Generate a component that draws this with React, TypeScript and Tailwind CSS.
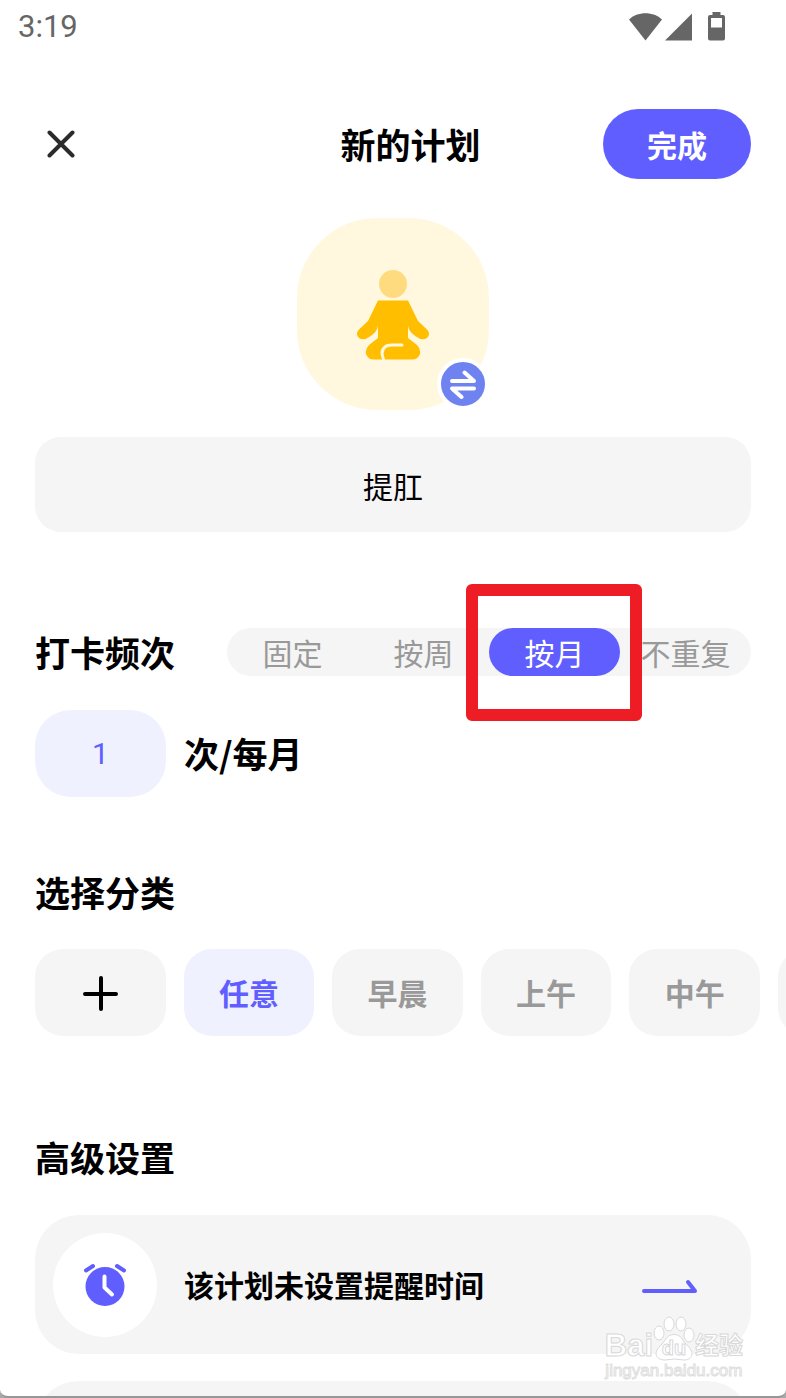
import { useState } from "react";
import clsx from "clsx";

const FREQUENCIES = ["固定", "按周", "按月", "不重复"];
const CATEGORIES = ["任意", "早晨", "上午", "中午"];

const StatusBar = () => (
  <div className="flex h-[54px] shrink-0 items-center justify-between pl-[18px] pr-[60px] text-[#666]">
    <span className="font-[Roboto,sans-serif] text-[31px]">3:19</span>
    <svg width="98" height="30" viewBox="0 0 98 30" fill="currentColor" aria-hidden="true">
      <path d="M1 7.500C9-1 26-1 34 7.500L17.500 28.500Z" />
      <path d="M64 1.500V28.500H37Z" />
      <path
        fillRule="evenodd"
        d="M84.500 0H92.500V3H95Q97 3 97 5V26.500Q97 28.500 95 28.500H82Q80 28.500 80 26.500V5Q80 3 82 3H84.500ZM83 6V15.500H94V6Z"
      />
    </svg>
  </div>
);

const Header = () => (
  <header className="mt-[55px] grid h-[70px] grid-cols-3 items-center">
    <button type="button" aria-label="关闭" className="ml-3 flex size-7 items-center justify-center">
      <svg width="28" height="28" viewBox="0 0 28 28" fill="none" stroke="#2b2b2b" strokeWidth="4" strokeLinecap="round">
        <path d="M2.500 2.500L25.500 25.500M25.500 2.500L2.500 25.500" />
      </svg>
    </button>
    <h1 className="pl-[35px] text-center text-[35px] font-bold">新的计划</h1>
    <button
      type="button"
      className="h-[70px] w-[148px] justify-self-end rounded-full bg-[#605eff] text-[30px] font-bold text-white"
    >
      完成
    </button>
  </header>
);

const PlanIcon = () => (
  <div className="relative mx-auto mt-[39px] flex size-48 items-center justify-center rounded-[80px] bg-[#fff8df]">
    <svg width="74" height="92" viewBox="0 0 74 92" aria-hidden="true">
      <circle cx="37" cy="16" r="14" fill="#ffdb80" />
      <path
        fill="#ffbe00"
        d="M22 32.500H52L62 53L71 61.500Q75 66 71 70Q66 73 60 68.500Q53 64 52 58V70L61 77Q65 81 64 86Q62 91.500 56 91.500H18Q12 91.500 10 86Q9 81 13 77L22 70V58Q21 64 14 68.500Q8 73 3 70Q-1 66 3 61.500L12 53Z"
      />
      <path d="M27.500 91Q24 83 29 79Q31 77 36 77H46" fill="none" stroke="#fff8df" strokeWidth="3" strokeLinecap="round" />
    </svg>
    <button
      type="button"
      aria-label="更换图标"
      className="absolute right-0 bottom-0 flex size-[52px] items-center justify-center rounded-full border-4 border-white bg-[#6f83f0]"
    >
      <svg width="28" height="30" viewBox="0 0 28 30" fill="none" stroke="#fff" strokeWidth="4" strokeLinecap="round" strokeLinejoin="round">
        <path d="M3 12H25L15.500 3.500M25 19.500H3L12.500 28" />
      </svg>
    </button>
  </div>
);

const FrequencyPicker = () => {
  const [selected, setSelected] = useState("按月");

  return (
    <section className="mt-24">
      <div className="flex items-center justify-between">
        <h2 className="text-[35px] leading-[48px] font-bold">打卡频次</h2>
        <div className="relative grid h-12 w-[524px] grid-cols-4 rounded-3xl bg-[#f5f5f5]">
          {FREQUENCIES.map((label) => (
            <button
              key={label}
              type="button"
              onClick={() => setSelected(label)}
              className={clsx(
                "rounded-full text-[30px] leading-[46px] whitespace-nowrap",
                selected === label ? "bg-[#605eff] text-white" : "text-[#999]",
              )}
            >
              {label}
            </button>
          ))}
          <div className="pointer-events-none absolute -top-11 left-[239px] h-[137px] w-44 rounded-md border-12 border-[#ee1c25]" />
        </div>
      </div>
      <label className="mt-[34px] flex items-center gap-[18px] text-[35px] font-bold">
        <input
          type="text"
          defaultValue="1"
          className="h-[87px] w-[131px] rounded-[36px] bg-[#eff1ff] text-center font-[Roboto,sans-serif] text-[30px] font-normal text-[#605eff]"
        />
        次/每月
      </label>
    </section>
  );
};

const CategoryPicker = () => {
  const [selected, setSelected] = useState("任意");

  return (
    <section className="mt-[71px]">
      <h2 className="text-[35px] leading-[48px] font-bold">选择分类</h2>
      <div className="-mr-[35px] mt-[33px] grid auto-cols-[calc((100%-98px)/5)] grid-flow-col gap-[18px] overflow-hidden">
        <button type="button" aria-label="添加分类" className="flex h-[87px] items-center justify-center rounded-[28px] bg-[#f5f5f5]">
          <svg width="36" height="36" viewBox="0 0 36 36" fill="none" stroke="#000" strokeWidth="4" strokeLinecap="round">
            <path d="M19 3V34M3 19H34" />
          </svg>
        </button>
        {CATEGORIES.map((label) => (
          <button
            key={label}
            type="button"
            onClick={() => setSelected(label)}
            className={clsx(
              "h-[87px] rounded-[28px] text-[30px] font-bold",
              selected === label ? "bg-[#eff1ff] text-[#605eff]" : "bg-[#f5f5f5] text-[#999]",
            )}
          >
            {label}
          </button>
        ))}
        <div className="h-[87px] rounded-[28px] bg-[#f5f5f5]" />
      </div>
    </section>
  );
};

const AdvancedSettings = () => (
  <section className="mt-[97px]">
    <h2 className="text-[35px] leading-[48px] font-bold">高级设置</h2>
    <button type="button" className="mt-[34px] flex h-[139px] w-full items-center rounded-[44px] bg-[#f5f5f5] pr-[53px] pl-[18px]">
      <span className="flex size-[104px] items-center justify-center rounded-full bg-white">
        <svg width="44" height="46" viewBox="0 0 44 46" fill="none" aria-hidden="true">
          <circle cx="22" cy="24.500" r="19.500" fill="#605eff" />
          <path d="M3 8.500L10 4M34 4L41 8.500" stroke="#605eff" strokeWidth="4" strokeLinecap="round" />
          <path d="M21.500 14.500V25.500L29 32.500" stroke="#fff" strokeWidth="4" strokeLinecap="round" strokeLinejoin="round" />
        </svg>
      </span>
      <span className="ml-[27px] flex-1 text-left text-[30px] font-bold">该计划未设置提醒时间</span>
      <svg width="56" height="18" viewBox="0 0 56 18" fill="none" stroke="#605eff" strokeWidth="4" strokeLinecap="round" strokeLinejoin="round" aria-hidden="true">
        <path d="M2 15H53L46 6" />
      </svg>
    </button>
    <div className="mt-[27px] h-[139px] rounded-[44px] bg-[#f5f5f5]" />
  </section>
);

const Watermark = () => (
  <div className="pointer-events-none absolute right-[43px] bottom-4 flex flex-col items-center">
    <div className="flex items-end font-['Liberation_Sans','Noto_Sans_CJK_SC',sans-serif] text-[31px] leading-8 font-bold text-white [-webkit-text-stroke:1px_#d8d8d8]">
      <span>Bai</span>
      <span className="relative flex h-[46px] w-[42px] justify-center pt-[18px] text-xl">
        <svg className="absolute inset-0" width="42" height="46" viewBox="0 0 42 46" fill="#fff" stroke="#d8d8d8" aria-hidden="true">
          <ellipse cx="6" cy="17" rx="5" ry="7" />
          <ellipse cx="16" cy="8" rx="5" ry="7" />
          <ellipse cx="28" cy="8" rx="5" ry="7" />
          <ellipse cx="36" cy="19" rx="5" ry="7" />
          <path d="M21 18.500C29 18.500 29 25 35 30C42 37 39 44 31 44Q21 42 12 44C3 44 0 37 7 30C13 25 13 18.500 21 18.500Z" />
        </svg>
        <span className="relative">du</span>
      </span>
      <span className="text-2xl leading-8">经验</span>
    </div>
    <span className="font-['Liberation_Sans',sans-serif] text-[17px] leading-[18px] text-white [-webkit-text-stroke:1px_#dedede]">
      jingyan.baidu.com
    </span>
  </div>
);

export default function App() {
  return (
    <div className="h-screen bg-[#a8a8a8]">
      <div className="relative flex h-full flex-col overflow-hidden rounded-b-lg border-b-2 border-[#979797] bg-white font-['Noto_Sans_CJK_SC',sans-serif] text-black">
        <StatusBar />
        <main className="px-[35px]">
          <Header />
          <PlanIcon />
          <input
            type="text"
            aria-label="计划名称"
            defaultValue="提肛"
            className="mt-[27px] h-[95px] w-full rounded-[26px] bg-[#f5f5f5] text-center text-[30px]"
          />
          <FrequencyPicker />
          <CategoryPicker />
          <AdvancedSettings />
        </main>
        <Watermark />
      </div>
    </div>
  );
}
